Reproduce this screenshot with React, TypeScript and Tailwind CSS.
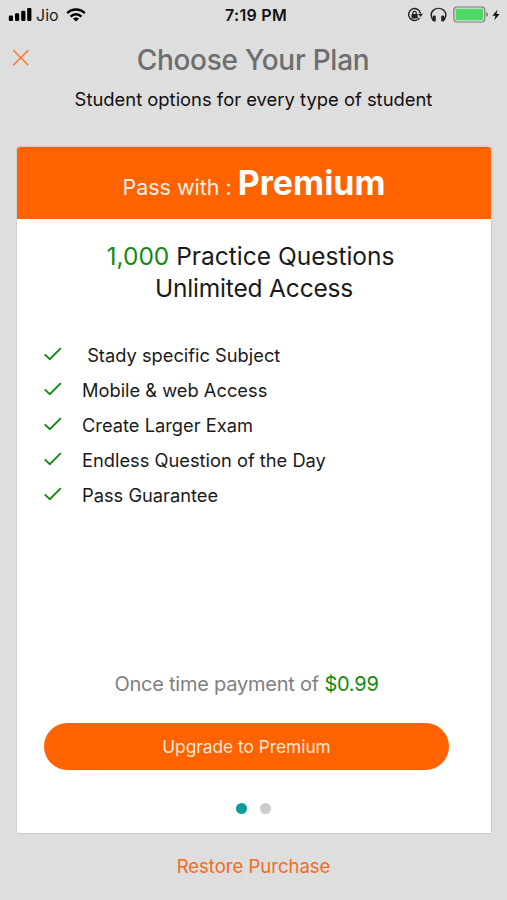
import type { ReactNode } from 'react';

const features = [
  '\u00a0Stady specific Subject',
  'Mobile & web Access',
  'Create Larger Exam',
  'Endless Question of the Day',
  'Pass Guarantee',
];

const StatusBar = () => (
  <div className="flex h-[30px] w-full shrink-0 items-center justify-between pr-[7px] pl-2 text-black">
    <div className="flex w-[200px] items-center">
      <svg className="mb-px h-[15px] w-6" viewBox="0 0 24 15">
        <rect x="0.8" y="8.5" width="4.2" height="5.5" rx="1.2" />
        <rect x="7" y="6.3" width="4.2" height="7.7" rx="1.2" />
        <rect x="13.2" y="3.8" width="4.2" height="10.2" rx="1.2" />
        <rect x="19.2" y="1" width="4.2" height="13" rx="1.2" />
      </svg>
      <span className="ml-[4px] w-[22px] text-[16px] leading-[30px] whitespace-nowrap text-[#222]">Jio</span>
      <svg className="mb-px ml-2 h-[14px] w-5" viewBox="0 0 20 14" fill="none" stroke="currentColor" strokeWidth="2.5">
        <path d="M1.2 5.1C6.2 0.2 13.8 0.2 18.8 5.1" />
        <path d="M4.6 8.6C7.7 5.6 12.3 5.6 15.4 8.6" />
        <path d="M10 13.6L6.9 10.6C8.7 9 11.3 9 13.1 10.6Z" fill="currentColor" stroke="none" />
      </svg>
    </div>
    <span className="ml-[4px] text-[16px] leading-[30px] font-semibold tracking-[0.3px] whitespace-nowrap text-[#111]">
      7:19 PM
    </span>
    <div className="flex w-[200px] items-center justify-end">
      <svg className="h-4 w-4" viewBox="0 0 16 16" fill="none" stroke="#222">
        <path d="M12.6 10.9A6 6 0 1 1 13.5 6.3" strokeWidth="1.4" />
        <path d="M11 6.8H16L13.5 10Z" fill="#222" stroke="none" />
        <rect x="4.5" y="7" width="6.2" height="4.4" rx="0.6" fill="#222" stroke="none" />
        <path d="M5.9 7.2V6A1.7 1.7 0 0 1 9.3 6V7.2" strokeWidth="1.2" />
      </svg>
      <svg className="ml-[7px] h-4 w-[17px]" viewBox="0 0 17 16" fill="none" stroke="#222">
        <path d="M3.4 13.5C0.6 9.5 0.6 5.5 3.5 3.1C6.4 0.8 10.6 0.8 13.5 3.1C16.4 5.5 16.4 9.5 13.6 13.5" strokeWidth="1.4" />
        <rect x="2.8" y="8.6" width="3" height="5.8" rx="1.2" fill="#222" stroke="none" />
        <rect x="11.2" y="8.6" width="3" height="5.8" rx="1.2" fill="#222" stroke="none" />
      </svg>
      <svg className="mb-px ml-[6px] h-[17px] w-9" viewBox="0 0 36 17">
        <rect x="0.8" y="1" width="31" height="15" rx="3.4" fill="none" stroke="#7d7d7d" strokeWidth="1.2" />
        <rect x="2.6" y="2.8" width="27.4" height="11.4" rx="1.2" fill="#4cd964" />
        <path d="M33.3 6.2C35.7 6.8 35.7 10.2 33.3 10.8Z" fill="#7d7d7d" />
      </svg>
      <svg className="mb-px ml-[3px] h-3 w-2" viewBox="0 0 9 12">
        <path d="M6.2 0L0.4 6.8H3.9L2.6 12L8.6 4.9H5.1Z" fill="#111" />
      </svg>
    </div>
  </div>
);

const FeatureRow = ({ children }: { children: ReactNode }) => (
  <li className="flex h-[35px] items-center">
    <svg className="mb-[3px] h-4 w-[18px]" viewBox="0 0 18 16" fill="none" stroke="#118a11" strokeWidth="1.9">
      <path d="M0.7 8.4L5.8 13.2L16.8 2.2" />
    </svg>
    <span className="ml-5 text-[18.3px] whitespace-nowrap text-[#1a1a1a]">{children}</span>
  </li>
);

export default function App() {
  return (
    <div className="flex h-[900px] w-[507px] flex-col overflow-hidden bg-[#dedede] font-['Inter',sans-serif]">
      <StatusBar />

      <header className="flex h-[117px] shrink-0 flex-col">
        <div className="flex h-[60px] items-center">
          <button className="ml-3 flex w-[18px] justify-center" aria-label="Close">
            <svg className="mb-1 h-[18px] w-[18px]" viewBox="0 0 18 18" fill="none" stroke="#f97a25" strokeWidth="1.5">
              <path d="M1.3 1.3L16.3 16.3M16.3 1.3L1.3 16.3" />
            </svg>
          </button>
          <h1 className="mr-[31px] flex-1 text-center text-[28px] font-medium tracking-[-0.27px] whitespace-nowrap text-[#6e6e6e]">
            Choose Your Plan
          </h1>
        </div>
        <p className="text-center text-[18.4px] leading-[18px] whitespace-nowrap text-[#111]">
          Student options for every type of student
        </p>
      </header>

      <main className="ml-[17px] flex h-[686px] w-[474px] shrink-0 flex-col overflow-hidden rounded-t-[3px] bg-white shadow-[0_0_2px_rgba(0,0,0,0.25)]">
        <div className="flex h-[72px] shrink-0 items-baseline justify-center bg-[#ff6200] leading-[71px] whitespace-nowrap text-white">
          <span className="text-[21.5px] text-[#fff0e5]">Pass with :</span>
          <span className="ml-[6px] text-[34px] font-bold">Premium</span>
        </div>

        <h2 className="mt-[21px] text-center text-[24.5px] leading-[32px] whitespace-nowrap text-[#1a1a1a]">
          <span className="block pr-[7px]">
            <span className="text-[#118a11]">1,000</span> Practice Questions
          </span>
          <span className="block tracking-[-0.17px]">Unlimited Access</span>
        </h2>

        <ul className="mt-[34px] ml-[27px]">
          {features.map((feature) => (
            <FeatureRow key={feature}>{feature}</FeatureRow>
          ))}
        </ul>

        <p className="mt-auto pr-[15px] text-center text-[20px] leading-[30px] tracking-[-0.23px] whitespace-nowrap text-[#808080]">
          Once time payment of <span className="text-[#118a11]">$0.99</span>
        </p>
        <button className="mt-6 ml-[27px] h-[47px] w-[405px] shrink-0 rounded-full bg-[#ff6200] pt-px text-[17.3px] text-[#ffe9d9]">
          Upgrade to Premium
        </button>
        <div className="mt-[33px] mb-[19px] flex justify-center gap-[13px] pr-px">
          <span className="size-[11px] rounded-full bg-[#0c9ca0]" />
          <span className="size-[11px] rounded-full bg-[#cbcbcb]" />
        </div>
      </main>

      <button className="mt-[18px] self-center text-[18.5px] leading-[30px] whitespace-nowrap text-[#f26c1d]">
        Restore Purchase
      </button>
    </div>
  );
}
